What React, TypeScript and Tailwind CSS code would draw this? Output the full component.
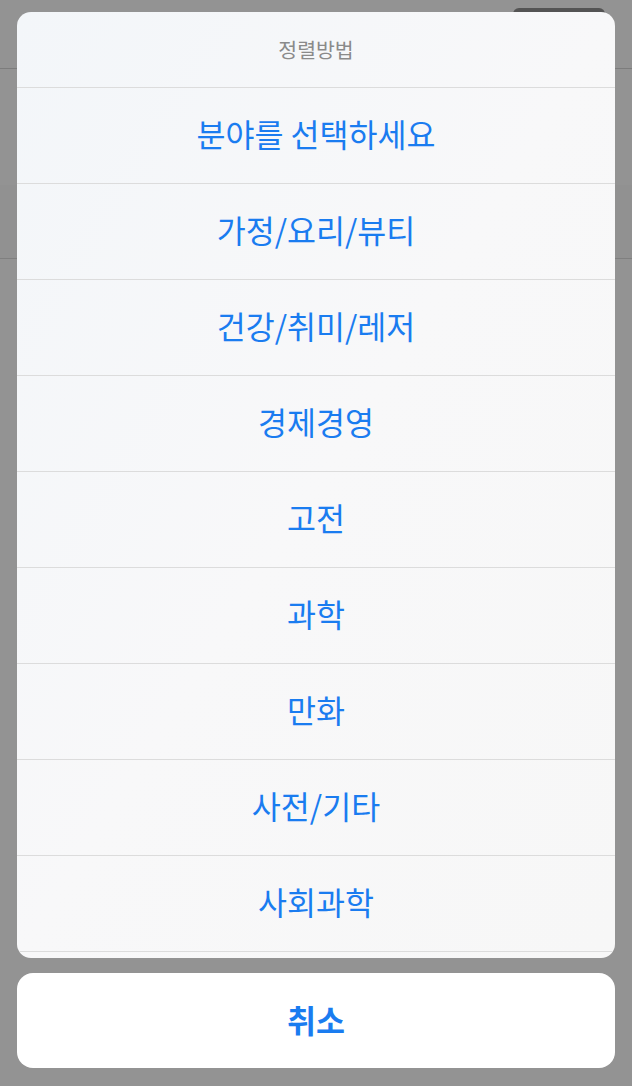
const items = [
  '분야를 선택하세요',
  '가정/요리/뷰티',
  '건강/취미/레저',
  '경제경영',
  '고전',
  '과학',
  '만화',
  '사전/기타',
  '사회과학',
];

const font = { fontFamily: '"Noto Sans CJK KR", "Noto Sans", sans-serif' };

export default function App() {
  return (
    <div className="relative h-[1086px] w-full overflow-hidden bg-[#939393]" style={font}>
      {/* dimmed page underneath */}
      <div className="flex flex-col">
        <div className="flex h-[69px] justify-end border-b border-[#7c7c7c] pr-[27px] pt-[8px]">
          <div className="h-[34px] w-[92px] rounded-[6px] bg-[#545454]" />
        </div>
        <div className="h-[116px]" />
        <div className="h-[74px] border-b border-[#7f7f7f] bg-[#919191]" />
      </div>

      {/* action sheet */}
      <div className="absolute inset-0 flex flex-col gap-[15px] px-[17px] pt-[12px]">
        <div className="flex h-[946px] flex-col overflow-hidden rounded-[14px] bg-gradient-to-br from-[#f3f6f9] via-[#f8f8f9] to-[#f7f7f7]">
          <div className="flex h-[75px] shrink-0 items-center justify-center text-[20.5px] leading-none text-[#8a8a8a]">
            정렬방법
          </div>
          {items.map((label) => (
            <div
              key={label}
              className="flex h-[96px] shrink-0 items-center justify-center border-t border-[#dcdcdc] pb-[4px] text-[31.5px] leading-none text-[#1a7cf0]"
            >
              {label}
            </div>
          ))}
          <div className="h-[96px] shrink-0 border-t border-[#dcdcdc]" />
        </div>
        <div className="flex h-[95px] items-center justify-center rounded-[16px] bg-white pb-[2px] text-[31.5px] font-bold leading-none text-[#1a7cf0]">
          취소
        </div>
      </div>
    </div>
  );
}
